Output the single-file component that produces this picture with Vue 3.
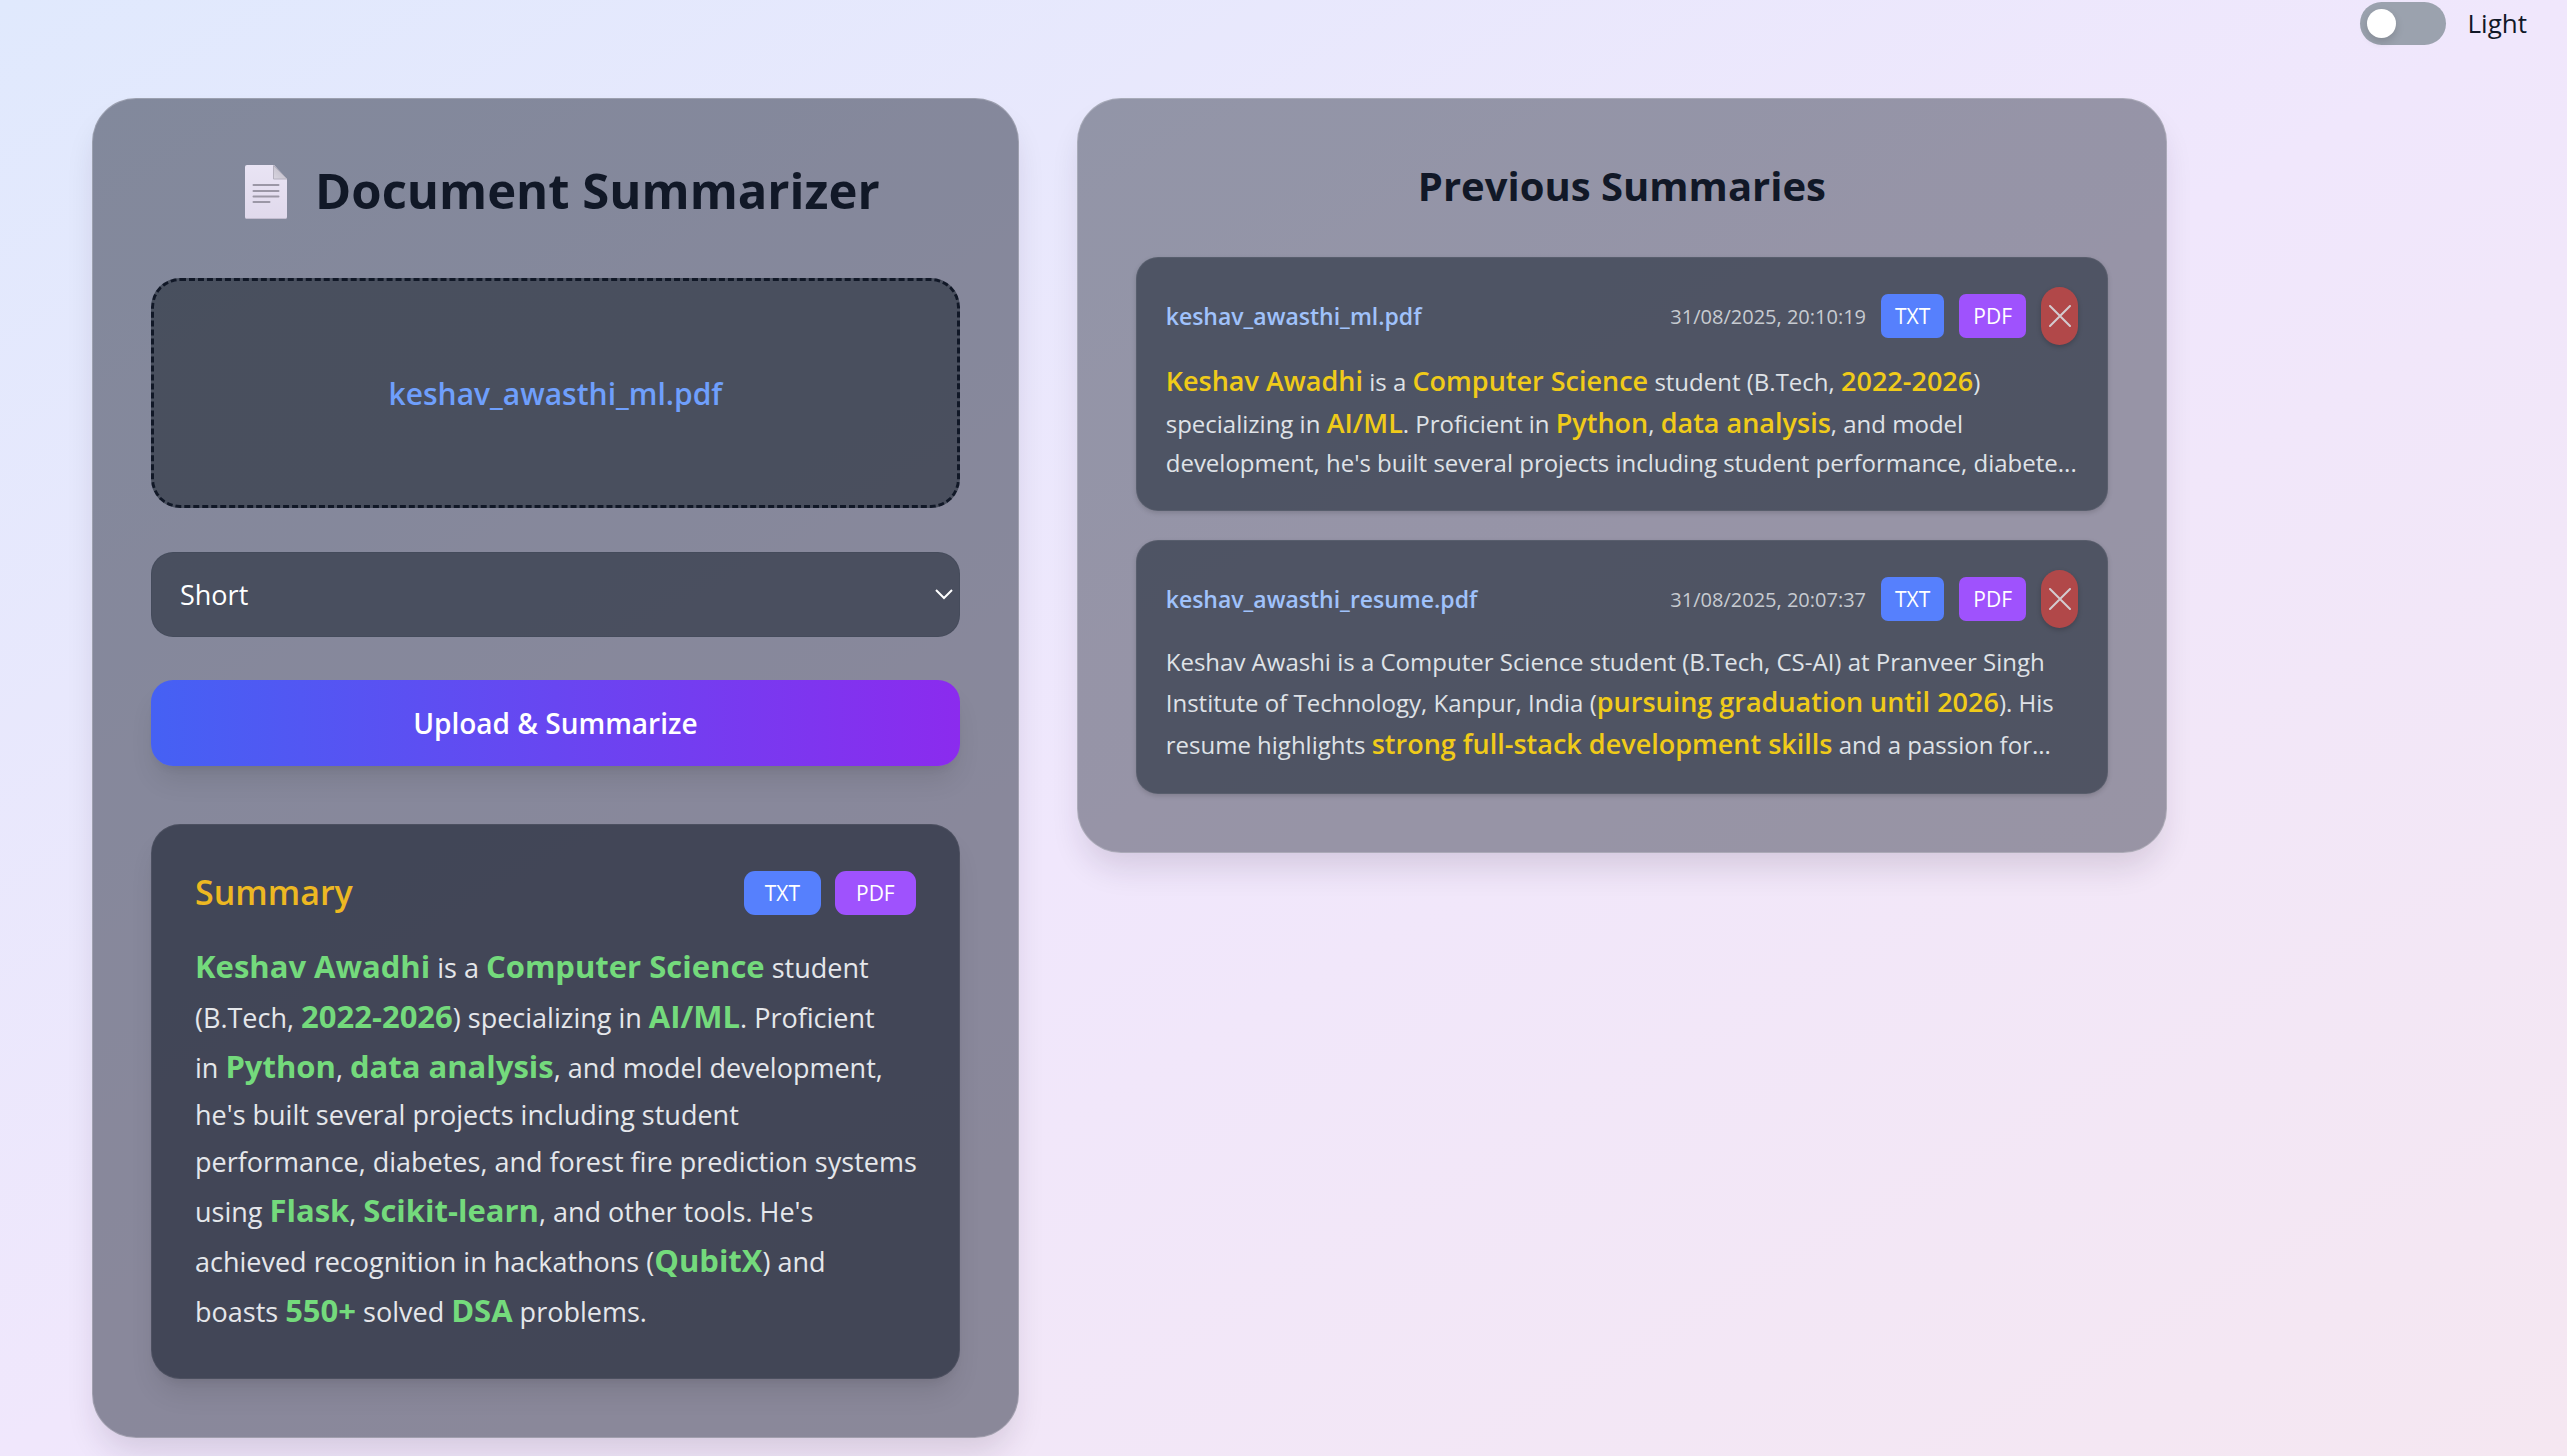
<script setup>
import { ref } from 'vue'

const light = ref(false)
const length = ref('short')

// Odd-numbered segments of every line are the highlighted ones.
const summary = [
  ['', 'Keshav Awadhi', ' is a ', 'Computer Science', ' student'],
  ['(B.Tech, ', '2022-2026', ') specializing in ', 'AI/ML', '. Proficient'],
  ['in ', 'Python', ', ', 'data analysis', ', and model development,'],
  ["he's built several projects including student"],
  ['performance, diabetes, and forest fire prediction systems'],
  ['using ', 'Flask', ', ', 'Scikit-learn', ", and other tools. He's"],
  ['achieved recognition in hackathons (', 'QubitX', ') and'],
  ['boasts ', '550+', ' solved ', 'DSA', ' problems.'],
]

const history = [
  {
    name: 'keshav_awasthi_ml.pdf',
    date: '31/08/2025, 20:10:19',
    lines: [
      ['', 'Keshav Awadhi', ' is a ', 'Computer Science', ' student (B.Tech, ', '2022-2026', ')'],
      ['specializing in ', 'AI/ML', '. Proficient in ', 'Python', ', ', 'data analysis', ', and model'],
      ["development, he's built several projects including student performance, diabete..."],
    ],
  },
  {
    name: 'keshav_awasthi_resume.pdf',
    date: '31/08/2025, 20:07:37',
    lines: [
      ['Keshav Awashi is a Computer Science student (B.Tech, CS-AI) at Pranveer Singh'],
      ['Institute of Technology, Kanpur, India (', 'pursuing graduation until 2026', '). His'],
      ['resume highlights ', 'strong full-stack development skills', ' and a passion for...'],
    ],
  },
]
</script>

<template>
  <div class="page">
    <header class="topbar">
      <label class="theme">
        <input v-model="light" type="checkbox" class="switch" />
        <span>Light</span>
      </label>
    </header>

    <main class="columns">
      <section class="panel panel-main">
        <h1 class="title">
          <svg class="doc" viewBox="0 0 70 60" aria-hidden="true">
            <defs>
              <linearGradient id="paper" x1="0" y1="0" x2="0" y2="1">
                <stop offset="0" stop-color="#e9e4f4" />
                <stop offset="1" stop-color="#e0d9ec" />
              </linearGradient>
              <linearGradient id="fold" x1="0" y1="1" x2="1" y2="0">
                <stop offset="0" stop-color="#d9d5e0" />
                <stop offset="1" stop-color="#b9b6c2" />
              </linearGradient>
            </defs>
            <path d="M16 5h27l13 14v38q0 2-2 2H16q-2 0-2-2V7q0-2 2-2z" fill="url(#paper)" />
            <path d="M15 58.500h40" stroke="#c3bdd0" stroke-width="1" />
            <path d="M42.500 5.500v13.500H56z" fill="url(#fold)" stroke="#b4b0be" stroke-width="1" />
            <path d="M22.500 25h25M22.500 31h25M22.500 36.500h25M22.500 42h16" stroke="#9b97a6" stroke-width="2" stroke-linecap="round" />
          </svg>
          <span>Document Summarizer</span>
        </h1>

        <label class="drop">
          <input type="file" class="file" />
          <span>keshav_awasthi_ml.pdf</span>
        </label>

        <div class="select-wrap">
          <select v-model="length" class="select" aria-label="Summary length">
            <option value="short">Short</option>
            <option value="medium">Medium</option>
            <option value="long">Long</option>
          </select>
          <svg class="chevron" viewBox="0 0 18 12" aria-hidden="true">
            <path d="M1 2l8 8 8-8" fill="none" stroke="#fff" stroke-width="2" />
          </svg>
        </div>

        <button type="button" class="upload">Upload &amp; Summarize</button>

        <article class="result">
          <div class="result-head">
            <h2>Summary</h2>
            <div class="result-actions">
              <button type="button" class="chip chip-wide txt">TXT</button>
              <button type="button" class="chip chip-wide pdf">PDF</button>
            </div>
          </div>
          <p class="result-text">
            <span v-for="(line, i) in summary" :key="i" class="line">
              <template v-for="(part, j) in line" :key="j"><strong v-if="j % 2">{{ part }}</strong><template v-else>{{ part }}</template></template>
            </span>
          </p>
        </article>
      </section>

      <section class="panel panel-history">
        <h2 class="subtitle">Previous Summaries</h2>
        <ul class="list">
          <li v-for="item in history" :key="item.name" class="item">
            <div class="item-head">
              <h3>{{ item.name }}</h3>
              <div class="item-actions">
                <time>{{ item.date }}</time>
                <button type="button" class="chip txt">TXT</button>
                <button type="button" class="chip pdf">PDF</button>
                <button type="button" class="remove" aria-label="Delete summary">
                  <svg viewBox="0 0 22 22" aria-hidden="true">
                    <path d="M1 1l20 20M21 1L1 21" fill="none" stroke="#d3ccd0" stroke-width="2" stroke-linecap="round" />
                  </svg>
                </button>
              </div>
            </div>
            <p class="item-text">
              <span v-for="(line, i) in item.lines" :key="i" class="line">
                <template v-for="(part, j) in line" :key="j"><strong v-if="j % 2">{{ part }}</strong><template v-else>{{ part }}</template></template>
              </span>
            </p>
          </li>
        </ul>
      </section>
    </main>
  </div>
</template>

<style>
body {
  margin: 0;
}
</style>

<style scoped>
.page {
  box-sizing: border-box;
  min-height: 100vh;
  background: linear-gradient(to bottom right, #e0e9fd, #f0e7fc 50%, #f5e7f1);
  font-family: "Open Sans", "Noto Sans", sans-serif;
  color: #111827;
}

.page *,
.page *::before {
  box-sizing: border-box;
}

h1,
h2,
h3,
p,
ul {
  margin: 0;
  padding: 0;
}

button,
select {
  font-family: inherit;
  border: 0;
  cursor: pointer;
}

.topbar {
  display: flex;
  justify-content: flex-end;
  padding: 1px 40px 0 0;
}

.theme {
  display: flex;
  align-items: center;
  gap: 22px;
  font-size: 26px;
  font-weight: 500;
  line-height: 44px;
}

.switch {
  appearance: none;
  width: 86px;
  height: 43px;
  margin: 0;
  padding: 7px;
  border-radius: 22px;
  background: #9ba2ae;
  cursor: pointer;
}

.switch::before {
  content: "";
  display: block;
  width: 29px;
  height: 29px;
  border-radius: 50%;
  background: #fff;
  box-shadow: 0 4px 8px rgba(0, 0, 0, 0.15);
}

.switch:checked::before {
  margin-left: auto;
}

.columns {
  display: grid;
  grid-template-columns: minmax(0, 17fr) minmax(0, 20fr);
  align-items: start;
  gap: 58px;
  padding: 53px 400px 14px 92px;
}

.panel {
  padding: 58px;
  border: 1px solid rgba(255, 255, 255, 0.2);
  border-radius: 44px;
  box-shadow: 0 20px 32px -6px rgba(40, 20, 60, 0.14);
}

.panel-main {
  background: rgba(30, 37, 56, 0.49);
}

.panel-history {
  background: rgba(17, 24, 39, 0.4);
}

.title {
  display: flex;
  align-items: center;
  justify-content: center;
  gap: 14px;
  margin-bottom: 55px;
  font-size: 49px;
  font-weight: 700;
  line-height: 66px;
  white-space: nowrap;
}

.doc {
  width: 70px;
  height: 60px;
}

.drop {
  display: flex;
  align-items: center;
  justify-content: center;
  height: 230px;
  margin-bottom: 44px;
  border: 3px dashed #111827;
  border-radius: 29px;
  background: rgba(33, 41, 54, 0.6);
  color: #6f9ffc;
  font-size: 30px;
  font-weight: 600;
  cursor: pointer;
}

.file {
  display: none;
}

.select-wrap {
  position: relative;
  margin-bottom: 43px;
}

.select {
  display: block;
  appearance: none;
  width: 100%;
  height: 85px;
  padding: 0 28px;
  border: 1px solid rgba(31, 41, 55, 0.1);
  border-radius: 22px;
  background: rgba(33, 41, 55, 0.6);
  color: #fff;
  font-size: 27px;
}

.chevron {
  position: absolute;
  top: 36px;
  right: 7px;
  width: 18px;
  height: 12px;
  pointer-events: none;
}

.upload {
  display: block;
  width: 100%;
  height: 86px;
  margin-bottom: 58px;
  border-radius: 22px;
  background: linear-gradient(to right, #4561f4, #8b2bee);
  box-shadow: 0 18px 27px -5px rgba(0, 0, 0, 0.1), 0 7px 11px -7px rgba(0, 0, 0, 0.1);
  color: #fff;
  font-size: 28px;
  font-weight: 600;
}

.result {
  padding: 43px;
  border: 1px solid rgba(255, 255, 255, 0.06);
  border-radius: 29px;
  background: rgba(33, 38, 54, 0.68);
  box-shadow: 0 18px 27px -5px rgba(0, 0, 0, 0.1), 0 7px 11px -7px rgba(0, 0, 0, 0.1);
}

.result-head,
.item-head {
  display: flex;
  align-items: center;
  justify-content: space-between;
}

.result-head {
  margin-bottom: 24px;
}

.result-head h2 {
  color: #edb822;
  font-size: 34px;
  font-weight: 600;
  line-height: 49px;
}

.result-actions {
  display: flex;
  gap: 14px;
}

.chip {
  height: 44px;
  padding: 0 14px;
  border-radius: 7px;
  color: #fff;
  font-size: 21px;
}

.chip-wide {
  padding: 0 21px;
  border-radius: 11px;
}

.txt {
  background: #5680fd;
}

.pdf {
  background: #9f52fd;
}

.line {
  display: block;
  white-space: nowrap;
}

.result-text {
  color: #e5e7eb;
  font-size: 27px;
  line-height: 47px;
}

.result-text strong {
  color: #74da7c;
  font-size: 31px;
  font-weight: 700;
  line-height: 50px;
}

.subtitle {
  margin-bottom: 42px;
  font-size: 40px;
  font-weight: 700;
  line-height: 58px;
  text-align: center;
}

.list {
  display: grid;
  gap: 29px;
  list-style: none;
}

.item {
  padding: 29px 29px 28px;
  border: 1px solid rgba(255, 255, 255, 0.06);
  border-radius: 22px;
  background: rgba(31, 41, 55, 0.6);
  box-shadow: 0 2px 5px rgba(0, 0, 0, 0.15);
}

.item-head {
  margin-bottom: 15px;
}

.item-head h3 {
  color: #a0c2fb;
  font-size: 23px;
  font-weight: 600;
}

.item-actions {
  display: flex;
  align-items: center;
  gap: 15px;
}

time {
  color: #c7cbd1;
  font-size: 20px;
}

.remove {
  display: flex;
  align-items: center;
  justify-content: center;
  width: 37px;
  height: 58px;
  padding: 0;
  border-radius: 19px;
  background: #b14849;
  box-shadow: 0 2px 5px rgba(0, 0, 0, 0.2);
}

.remove svg {
  width: 22px;
  height: 22px;
}

.item-text {
  color: #dfe2e7;
  font-size: 24px;
  line-height: 38px;
}

.item-text strong {
  color: #f0cb19;
  font-size: 27px;
  font-weight: 600;
  line-height: 42px;
}
</style>
